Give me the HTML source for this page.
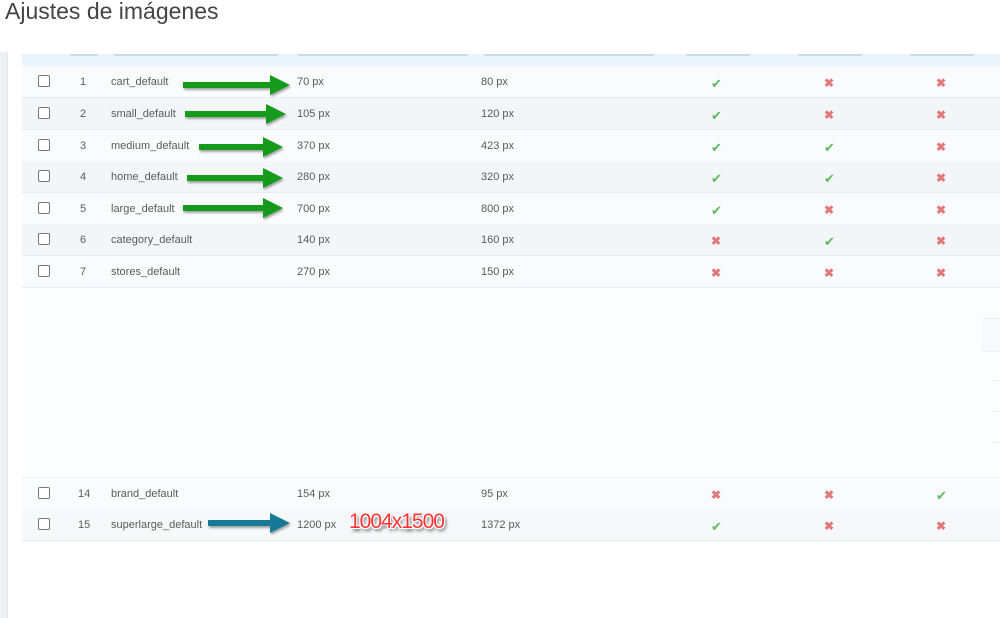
<!DOCTYPE html>
<html><head><meta charset="utf-8"><style>
body{margin:0;width:1000px;height:618px;background:#fff;font-family:"Liberation Sans",sans-serif;position:relative;overflow:hidden}
.ls{position:absolute;left:0;top:52px;width:7px;height:566px;background:#eef0f3;border-right:1px solid #e3e6ea}
h1{position:absolute;left:5px;top:-2px;margin:0;font-weight:normal;font-size:23px;color:#444}
.hdr{position:absolute;left:22px;top:54px;width:978px;height:12px;background:#eaf4fb;border-bottom:1px solid #bcd8ea}
.hdr i{position:absolute;top:0;height:2px;background:#c8dcea}
.row{position:absolute;left:22px;width:978px;height:31px;border-bottom:1px solid #e8ecf0;font-size:11px;color:#5a5a5a}
.row span{position:absolute;top:10px}
.cb{position:absolute;left:16px;top:9px;width:10px;height:10px;border:1px solid #777;border-radius:2px;background:#fff}
.ok{color:#5cb85c;font-size:13px}.no{color:#e07a7a;font-size:12px;font-weight:bold}
.gap{position:absolute;left:22px;top:288px;width:978px;height:188px;background:#fcfdfe}
.badge{position:absolute;left:349px;top:510px;font-size:21px;letter-spacing:-1px;color:#f33;text-shadow:1px 1px 0 #fff,-1px -1px 0 #fff,1px -1px 0 #fff,-1px 1px 0 #fff,2px 3px 3px #555}
</style></head><body>
<h1>Ajustes de imágenes</h1>
<div class="ls"></div>
<div class="hdr"><i style="left:48px;width:28px"></i><i style="left:92px;width:164px"></i><i style="left:276px;width:170px"></i><i style="left:462px;width:170px"></i><i style="left:664px;width:64px"></i><i style="left:776px;width:64px"></i><i style="left:888px;width:64px"></i></div>

<div class="row" style="top:66px;background:#f9fbfd"><div class="cb"></div><span style="left:58px">1</span><span style="left:89px">cart_default</span><span style="left:275px">70 px</span><span style="left:459px">80 px</span><span class="ok" style="left:689px">✔</span><span class="no" style="left:802px">✖</span><span class="no" style="left:914px">✖</span></div>
<div class="row" style="top:98px;background:#f3f6f9"><div class="cb"></div><span style="left:58px">2</span><span style="left:89px">small_default</span><span style="left:275px">105 px</span><span style="left:459px">120 px</span><span class="ok" style="left:689px">✔</span><span class="no" style="left:802px">✖</span><span class="no" style="left:914px">✖</span></div>
<div class="row" style="top:130px;background:#f9fbfd"><div class="cb"></div><span style="left:58px">3</span><span style="left:89px">medium_default</span><span style="left:275px">370 px</span><span style="left:459px">423 px</span><span class="ok" style="left:689px">✔</span><span class="ok" style="left:802px">✔</span><span class="no" style="left:914px">✖</span></div>
<div class="row" style="top:161px;background:#f3f6f9"><div class="cb"></div><span style="left:58px">4</span><span style="left:89px">home_default</span><span style="left:275px">280 px</span><span style="left:459px">320 px</span><span class="ok" style="left:689px">✔</span><span class="ok" style="left:802px">✔</span><span class="no" style="left:914px">✖</span></div>
<div class="row" style="top:193px;background:#f9fbfd"><div class="cb"></div><span style="left:58px">5</span><span style="left:89px">large_default</span><span style="left:275px">700 px</span><span style="left:459px">800 px</span><span class="ok" style="left:689px">✔</span><span class="no" style="left:802px">✖</span><span class="no" style="left:914px">✖</span></div>
<div class="row" style="top:224px;background:#f3f6f9"><div class="cb"></div><span style="left:58px">6</span><span style="left:89px">category_default</span><span style="left:275px">140 px</span><span style="left:459px">160 px</span><span class="no" style="left:689px">✖</span><span class="ok" style="left:802px">✔</span><span class="no" style="left:914px">✖</span></div>
<div class="row" style="top:256px;background:#f9fbfd"><div class="cb"></div><span style="left:58px">7</span><span style="left:89px">stores_default</span><span style="left:275px">270 px</span><span style="left:459px">150 px</span><span class="no" style="left:689px">✖</span><span class="no" style="left:802px">✖</span><span class="no" style="left:914px">✖</span></div>
<div class="gap"><div style="position:absolute;right:0;top:30px;width:18px;height:32px;border-top:1px solid #eee;border-bottom:1px solid #eee;background:#f7f9fb"></div><div style="position:absolute;right:0;top:92px;width:8px;height:30px;border-top:1px solid #eee;border-bottom:1px solid #eee"></div><div style="position:absolute;right:0;top:154px;width:8px;height:30px;border-top:1px solid #eee"></div></div>
<div class="row" style="top:477px;background:#fafbfd;border-top:1px solid #eef1f4"><div class="cb"></div><span style="left:56px">14</span><span style="left:89px">brand_default</span><span style="left:275px">154 px</span><span style="left:459px">95 px</span><span class="no" style="left:689px">✖</span><span class="no" style="left:802px">✖</span><span class="ok" style="left:914px">✔</span></div>
<div class="row" style="top:509px;background:#f6f8fa"><div class="cb"></div><span style="left:56px">15</span><span style="left:89px">superlarge_default</span><span style="left:275px">1200 px</span><span style="left:459px">1372 px</span><span class="ok" style="left:689px">✔</span><span class="no" style="left:802px">✖</span><span class="no" style="left:914px">✖</span></div>

<svg width="1000" height="618" style="position:absolute;left:0;top:0">
<defs><filter id="s"><feDropShadow dx="1" dy="2" stdDeviation="1" flood-opacity="0.35"/></filter></defs>
<g fill="#139a1a" filter="url(#s)">
<polygon points="183,82 270,82 270,75 290,85 270,95 270,88 183,88"/>
<polygon points="185,111 266,111 266,104 286,114 266,124 266,117 185,117"/>
<polygon points="199,144 263,144 263,137 283,147 263,157 263,150 199,150"/>
<polygon points="187,175 263,175 263,168 283,178 263,188 263,181 187,181"/>
<polygon points="183,205 263,205 263,198 283,208 263,218 263,211 183,211"/>
</g>
<polygon fill="#127a96" filter="url(#s)" points="208,520 270,520 270,513 290,523 270,533 270,526 208,526"/>
</svg>
<div class="badge">1004x1500</div>
</body></html>
